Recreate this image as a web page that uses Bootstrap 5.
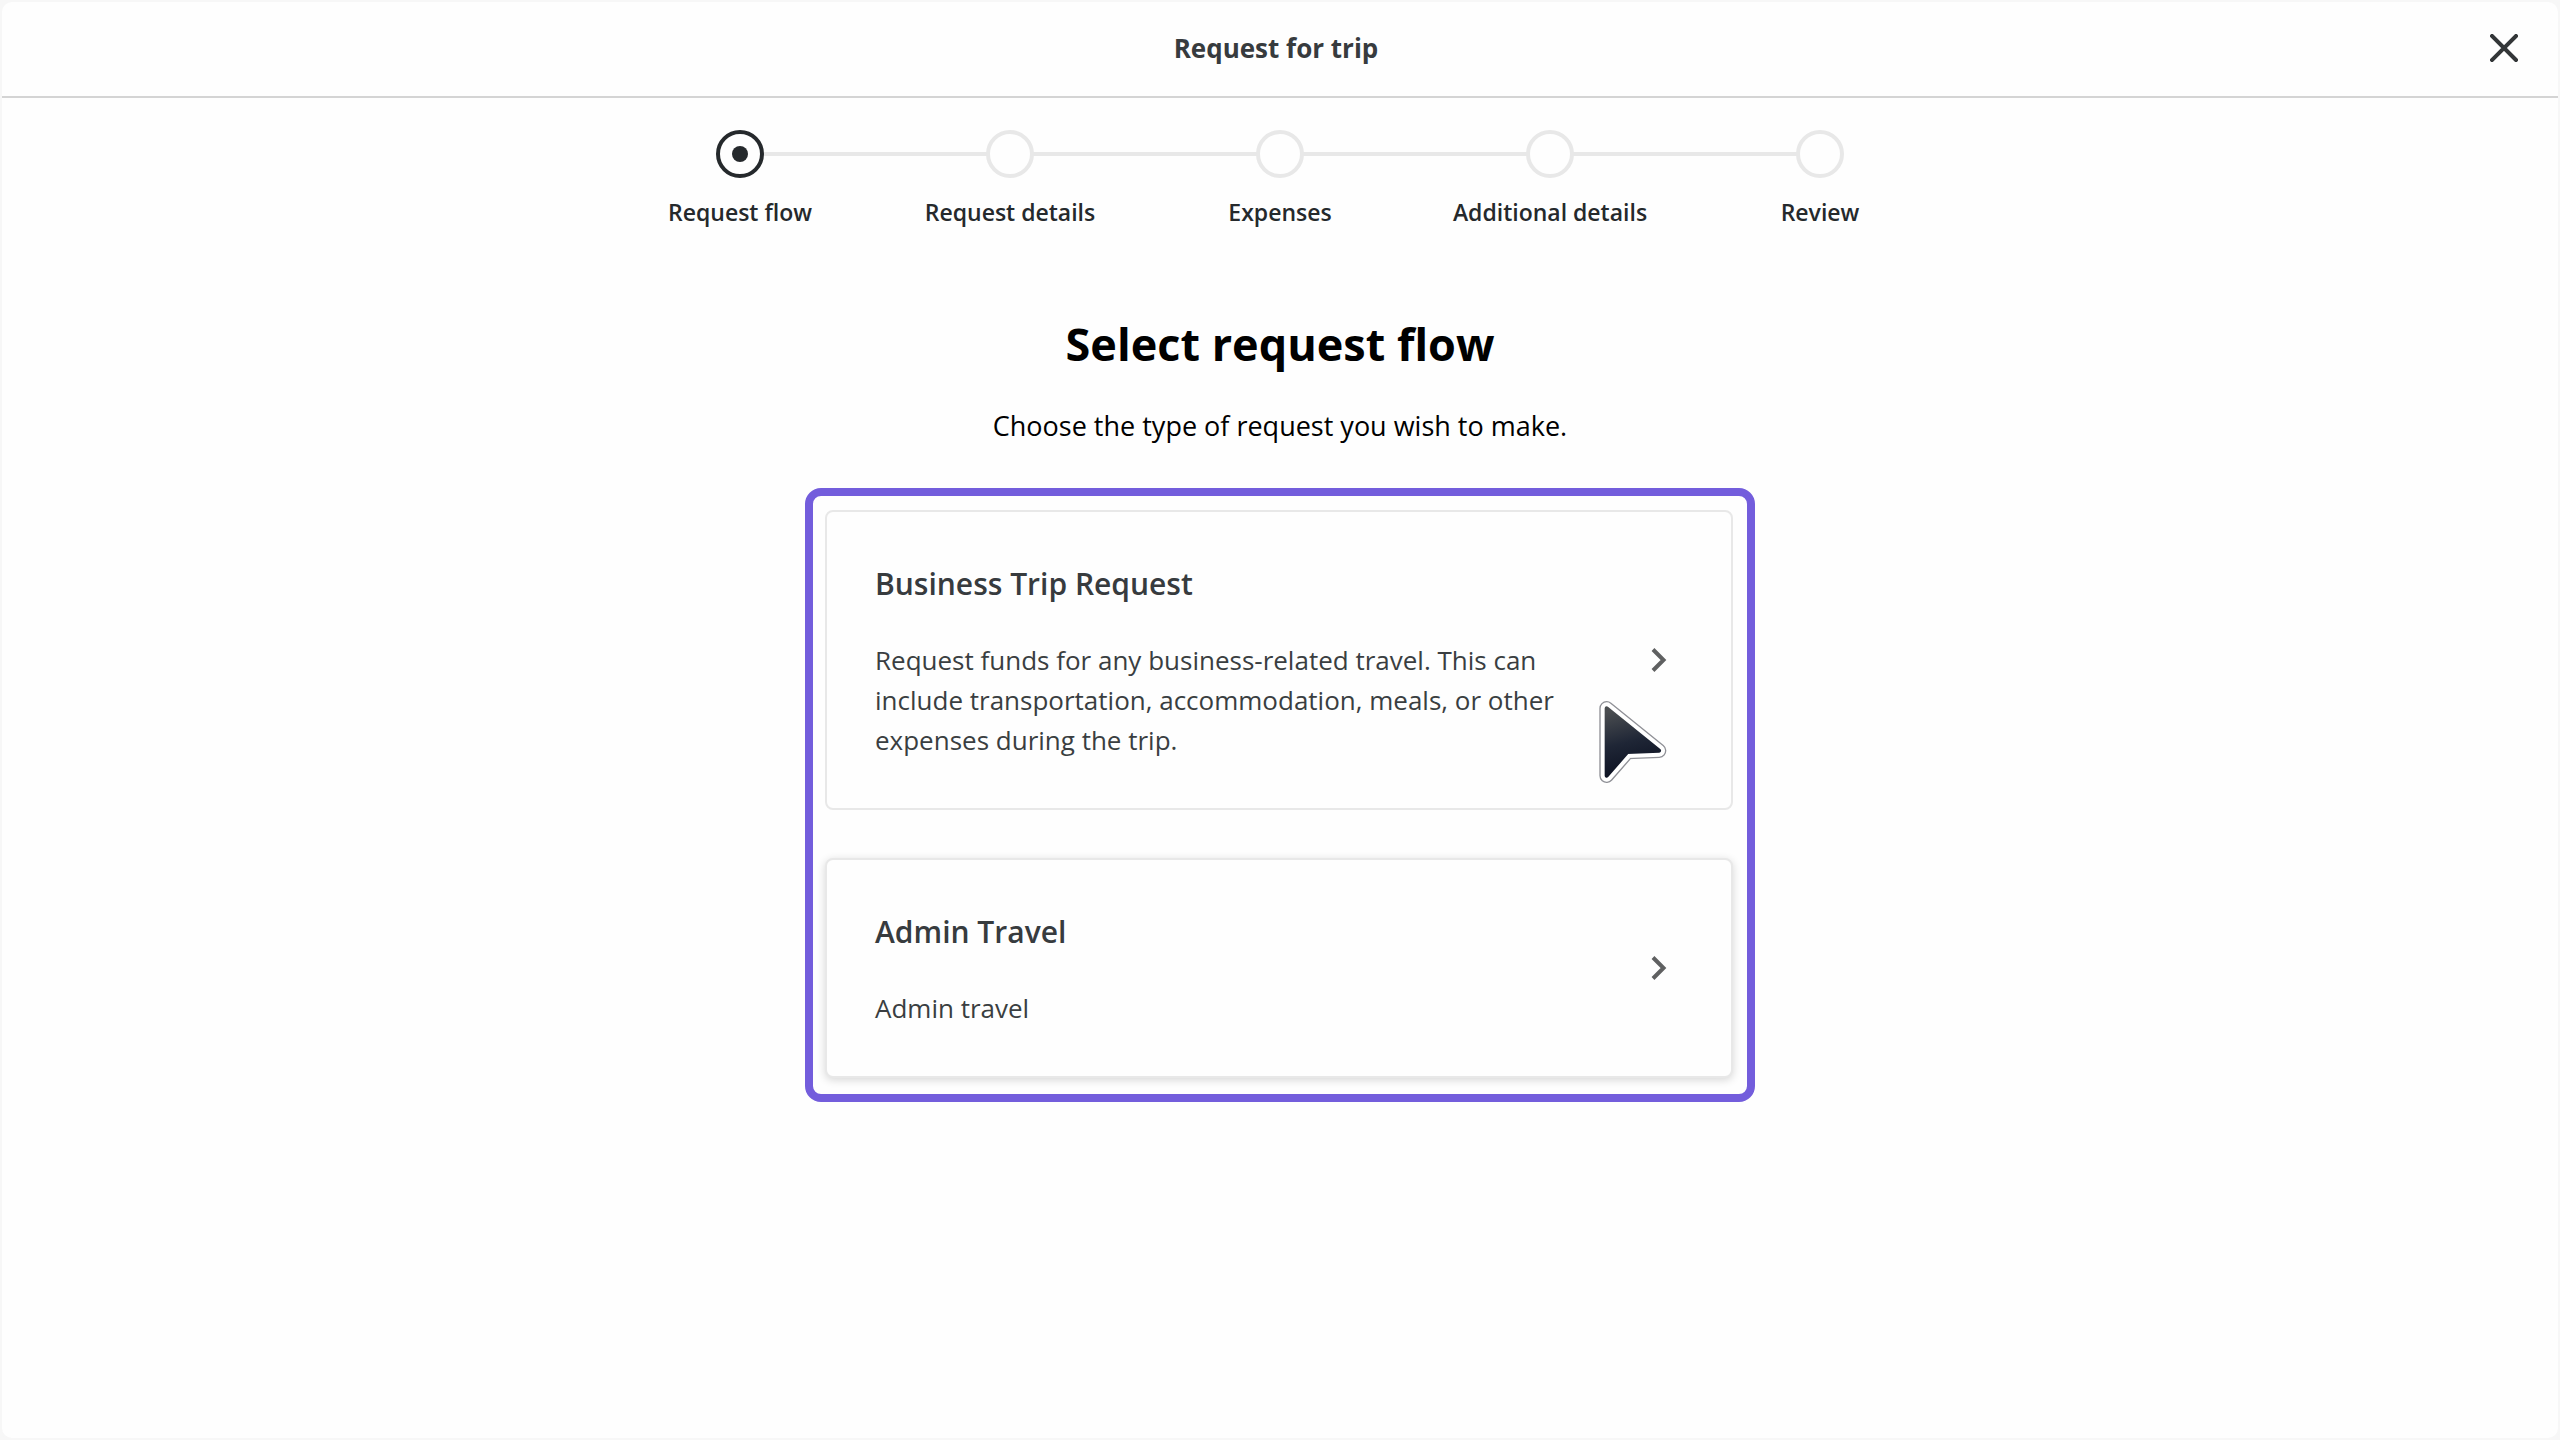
<!DOCTYPE html>
<html lang="en">
<head>
<meta charset="utf-8">
<meta name="viewport" content="width=device-width, initial-scale=1">
<title>Request for trip</title>
<link href="https://cdn.jsdelivr.net/npm/bootstrap@5.3.0/dist/css/bootstrap.min.css" rel="stylesheet">
<style>
  body { font-family: "Open Sans", "Noto Sans", sans-serif; font-size: 27px; line-height: 40px; color: #000; background: #f7f7f7; }
  .sheet { border: 2px solid #f7f7f7; border-radius: 12px; background: #fefefe; }
  .sheet-header { height: 96px; padding: 0 24px 2px; border-bottom: 2px solid #d4d4d4; }
  .header-spacer { width: 52px; }
  .sheet-title { font-size: 26px; font-weight: 700; line-height: 40px; color: #373b3e; }
  .close-btn { width: 60px; height: 60px; color: #333638; }
  .stepper { width: 1350px; max-width: 100%; padding-top: 32px; }
  .step { position: relative; flex: 1 1 0; font-size: 23px; font-weight: 600; line-height: 32px; color: #25292c; gap: 18px; }
  .step + .step::before { content: ""; position: absolute; top: 22px; right: 50%; width: 100%; height: 4px; background: #e8e8e8; }
  .step-dot { position: relative; z-index: 1; width: 48px; height: 48px; border: 4px solid #e8e8e8; border-radius: 50%; background: #fefefe; }
  .step.active .step-dot { z-index: 2; border-color: #25292c; }
  .step.active .step-dot::after { content: ""; width: 16px; height: 16px; border-radius: 50%; background: #25292c; }
  .page-title { margin: 84px 0 30px; font-size: 45px; font-weight: 700; line-height: 64px; }
  .flow-list { width: 950px; max-width: 100%; margin-top: 42px; padding: 14px 14px 16px 12px; gap: 48px; border: 8px solid #735ddc; border-radius: 16px; }
  .flow-card { position: relative; padding: 48px; border: 2px solid #e8e8e8; border-radius: 8px; background: #fefefe; color: #3a3e41; }
  .flow-card.raised { box-shadow: 0 2px 8px rgba(0, 0, 0, .16); }
  .flow-name { margin: 0 0 32px; font-size: 30px; font-weight: 600; line-height: 48px; color: #373b3e; }
  .flow-text { max-width: 700px; font-size: 26px; }
  .chevron { width: 48px; height: 48px; }
  .pointer { position: absolute; left: 769px; top: 186px; width: 72px; height: 88px; }
</style>
</head>
<body>
<div class="sheet min-vh-100 d-flex flex-column">
  <header class="sheet-header d-flex align-items-center">
    <span class="header-spacer"></span>
    <h1 class="sheet-title flex-grow-1 text-center mb-0">Request for trip</h1>
    <button type="button" class="close-btn btn border-0 p-0 d-flex align-items-center justify-content-center" aria-label="Close">
      <svg width="28" height="28" viewBox="0 0 28 28" fill="none" stroke="currentColor" stroke-width="4" stroke-linecap="square" aria-hidden="true"><path d="M2 2 26 26M26 2 2 26"/></svg>
    </button>
  </header>
  <main class="d-flex flex-column align-items-center">
    <ol class="stepper d-flex list-unstyled mb-0">
      <li class="step active d-flex flex-column align-items-center" aria-current="step"><span class="step-dot d-flex align-items-center justify-content-center"></span>Request flow</li>
      <li class="step d-flex flex-column align-items-center"><span class="step-dot"></span>Request details</li>
      <li class="step d-flex flex-column align-items-center"><span class="step-dot"></span>Expenses</li>
      <li class="step d-flex flex-column align-items-center"><span class="step-dot"></span>Additional details</li>
      <li class="step d-flex flex-column align-items-center"><span class="step-dot"></span>Review</li>
    </ol>
    <h2 class="page-title text-center">Select request flow</h2>
    <p class="text-center mb-0">Choose the type of request you wish to make.</p>
    <div class="flow-list d-flex flex-column">
      <a href="#business" class="flow-card d-flex align-items-center justify-content-between text-decoration-none">
        <div>
          <h3 class="flow-name">Business Trip Request</h3>
          <p class="flow-text mb-0">Request funds for any business-related travel. This can include transportation, accommodation, meals, or other expenses during the trip.</p>
        </div>
        <svg class="chevron flex-shrink-0" viewBox="0 0 48 48" fill="none" stroke="#5f6061" stroke-width="4" aria-hidden="true"><path d="M18 13.500 28.500 24 18 34.500"/></svg>
        <svg class="pointer" viewBox="948 684 216 264" stroke-linejoin="round" aria-hidden="true">
          <defs><linearGradient id="ink" x1="0.300" y1="0" x2="0.500" y2="1"><stop offset="0" stop-color="#4a4d50"/><stop offset=".5" stop-color="#1f2636"/><stop offset="1" stop-color="#0b1020"/></linearGradient></defs>
          <path d="M980 715 1137 842 1042 846 980 917Z" stroke="#8f9096" stroke-width="44"/>
          <path d="M980 715 1137 842 1042 846 980 917Z" stroke="#fff" stroke-width="36"/>
          <path d="M980 715 1137 842 1042 846 980 917Z" fill="url(#ink)" stroke="url(#ink)" stroke-width="12"/>
        </svg>
      </a>
      <a href="#admin" class="flow-card raised d-flex align-items-center justify-content-between text-decoration-none">
        <div>
          <h3 class="flow-name">Admin Travel</h3>
          <p class="flow-text mb-0">Admin travel</p>
        </div>
        <svg class="chevron flex-shrink-0" viewBox="0 0 48 48" fill="none" stroke="#5f6061" stroke-width="4" aria-hidden="true"><path d="M18 13.500 28.500 24 18 34.500"/></svg>
      </a>
    </div>
  </main>
</div>
<script src="https://cdn.jsdelivr.net/npm/bootstrap@5.3.0/dist/js/bootstrap.bundle.min.js"></script>
</body>
</html>
